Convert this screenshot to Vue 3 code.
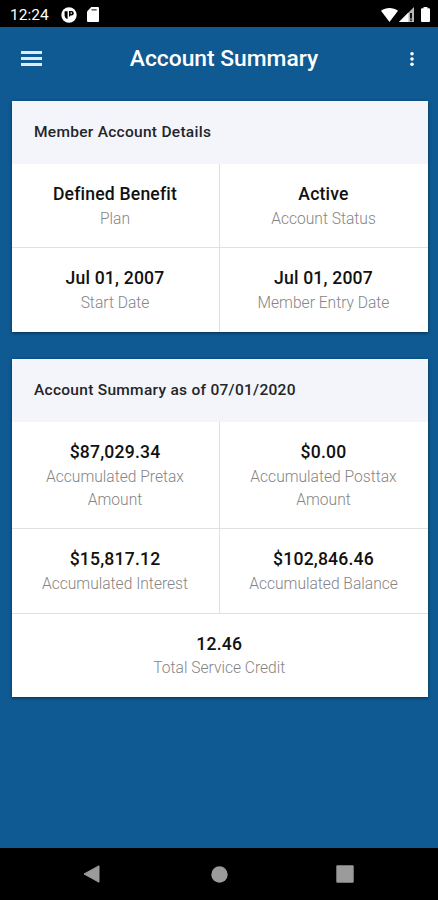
<template>
  <div class="phone">
    <div class="status-bar">
      <span class="status-bar__time">12:24</span>
      <svg class="status-bar__app" width="16" height="16" viewBox="0 0 16 16">
        <circle cx="8" cy="8" r="7.7" fill="#fff" />
        <path d="M3.6 4.2h3v7.6H5.4A4 4 0 0 1 3.6 8.6z" fill="#000" />
        <path d="M8 4h2.6a2.2 2.2 0 0 1 0 4.4H9.2v1.2H8z" fill="#000" />
        <circle cx="10.2" cy="6.1" r=".8" fill="#fff" />
      </svg>
      <svg class="status-bar__sd" width="12" height="15" viewBox="0 0 12 15">
        <path d="M4.3 0H11q1 0 1 1v13q0 1-1 1H1q-1 0-1-1V4.5z" fill="#fff" />
        <path d="M4.5 2.8h5.2" stroke="#666" stroke-width="1.6" />
      </svg>
      <div class="status-bar__right">
        <svg width="17" height="14" viewBox="0 0 17 14">
          <path d="M0 2.8C5 -.9 12 -.9 17 2.8L8.5 14z" fill="#fff" />
        </svg>
        <svg class="status-bar__signal" width="15" height="15" viewBox="0 0 15 15">
          <path d="M15 0v15H0z" fill="#b5b5b5" />
          <path d="M9.5 5.5V15H0z" fill="#fff" />
          <path d="M12 6v5.5M12 12.5v1.3" stroke="#000" stroke-width="1.8" />
        </svg>
        <svg class="status-bar__battery" width="9" height="15" viewBox="0 0 9 15">
          <path d="M2.5 0h4v1.3H8q1 0 1 1V14q0 1-1 1H1q-1 0-1-1V2.3q0-1 1-1h1.5z" fill="#fff" />
        </svg>
      </div>
    </div>

    <header class="app-bar">
      <svg class="app-bar__menu" width="21" height="15" viewBox="0 0 21 15">
        <path d="M0 1.5h21M0 7.5h21M0 13.5h21" stroke="#dfecf8" stroke-width="3" />
      </svg>
      <h1 class="app-bar__title">Account Summary</h1>
      <svg class="app-bar__more" width="4" height="14" viewBox="0 0 4 14">
        <circle v-for="y in [1.8, 7, 12.2]" :key="y" cx="2" :cy="y" r="1.8" fill="#fff" />
      </svg>
    </header>

    <main class="content">
      <section v-for="card in cards" :key="card.title" class="card">
        <h2 class="card__title">{{ card.title }}</h2>
        <div v-for="(row, i) in card.rows" :key="i" class="card__row">
          <div v-for="item in row" :key="item.label" class="cell">
            <div class="cell__value">{{ item.value }}</div>
            <div class="cell__label">{{ item.label }}</div>
          </div>
        </div>
      </section>
    </main>

    <nav class="nav-bar">
      <svg width="17" height="18" viewBox="0 0 17 18">
        <path d="M16 .8v16.4L1 9z" fill="#9b9b9b" stroke="#9b9b9b" stroke-linejoin="round" />
      </svg>
      <svg class="nav-bar__home" width="17" height="17" viewBox="0 0 17 17">
        <circle cx="8.5" cy="8.5" r="8.2" fill="#9b9b9b" />
      </svg>
      <svg width="18" height="18" viewBox="0 0 18 18">
        <rect x=".3" y=".3" width="17.4" height="17.4" rx="1.2" fill="#9b9b9b" />
      </svg>
    </nav>
  </div>
</template>

<script setup>
const cards = [
  {
    title: 'Member Account Details',
    rows: [
      [
        { value: 'Defined Benefit', label: 'Plan' },
        { value: 'Active', label: 'Account Status' },
      ],
      [
        { value: 'Jul 01, 2007', label: 'Start Date' },
        { value: 'Jul 01, 2007', label: 'Member Entry Date' },
      ],
    ],
  },
  {
    title: 'Account Summary as of 07/01/2020',
    rows: [
      [
        { value: '$87,029.34', label: 'Accumulated Pretax Amount' },
        { value: '$0.00', label: 'Accumulated Posttax Amount' },
      ],
      [
        { value: '$15,817.12', label: 'Accumulated Interest' },
        { value: '$102,846.46', label: 'Accumulated Balance' },
      ],
      [{ value: '12.46', label: 'Total Service Credit' }],
    ],
  },
]
</script>

<style>
body {
  margin: 0;
}
</style>

<style scoped>
.phone {
  display: flex;
  flex-direction: column;
  width: 438px;
  height: 900px;
  overflow: hidden;
  background: #0f5a93;
  font-family: Roboto, sans-serif;
}

/* Status bar */
.status-bar {
  display: flex;
  align-items: center;
  box-sizing: border-box;
  height: 27px;
  padding: 2px 8px 0 10px;
  background: #000;
  color: #fff;
}
.status-bar__time {
  width: 51px;
  font-size: 15.5px;
  line-height: 24px;
}
.status-bar__sd {
  margin-left: 10px;
}
.status-bar__right {
  display: flex;
  align-items: center;
  margin-left: auto;
}
.status-bar__signal {
  margin-left: 1px;
}
.status-bar__battery {
  margin-left: 7px;
}

/* App bar */
.app-bar {
  display: flex;
  align-items: center;
  justify-content: space-between;
  height: 63px;
  padding: 0 24px 0 21px;
  color: #fff;
}
.app-bar__title {
  margin: 0 0 0 -4px;
  font-size: 22.8px;
  font-weight: 500;
}

/* Cards */
.content {
  flex: 1;
  padding: 11px 10.5px 0 11.5px;
}
.card {
  margin-bottom: 27.4px;
  background: #fff;
  box-shadow: 0 1px 3px rgba(0, 0, 0, 0.5);
}
.card__title {
  height: 63px;
  margin: 0;
  padding-left: 22.5px;
  background: #f3f5fa;
  color: #242529;
  font-size: 15.5px;
  font-weight: 500;
  line-height: 62px;
  letter-spacing: 0.28px;
}
.card__row {
  display: flex;
}
.card__row + .card__row {
  border-top: 1px solid #e0e0e0;
}
.cell {
  flex: 1 1 0;
  padding: 18px 23.5px 16.7px 23px;
  text-align: center;
}
.cell + .cell {
  border-left: 1px solid #e0e0e0;
}
.cell__value {
  margin-bottom: 1.6px;
  color: #111;
  font-size: 17.6px;
  font-weight: 500;
  line-height: 24px;
  letter-spacing: 0.18px;
}
.cell__label {
  color: #858585;
  font-size: 15.6px;
  font-weight: 300;
  line-height: 23px;
}

/* Navigation bar */
.nav-bar {
  display: flex;
  align-items: center;
  justify-content: space-between;
  height: 52px;
  padding: 0 84px 0 83px;
  background: #000;
}
.nav-bar__home {
  margin-left: 2px;
}
</style>
